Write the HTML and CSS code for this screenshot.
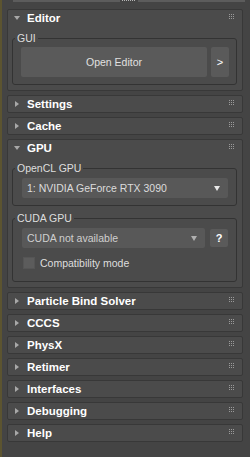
FILE: index.html
```html
<!DOCTYPE html>
<html lang="en">
<head>
  <meta charset="UTF-8" />
  <title>Command Panel</title>
  <link rel="stylesheet" href="styles.css">
</head>
<body>
  <div class="stack">
    <div class="top-edge">
      <span class="edge-line"></span>
      <span class="edge-grip"></span>
      <span class="edge-line"></span>
    </div>

    <section class="rollout open">
      <div class="rollout-head"><span class="caret"></span>Editor<span class="grip"></span></div>
      <div class="rollout-body">
        <fieldset class="group group-editor">
          <legend>GUI</legend>
          <div class="btn-row">
            <button class="btn btn-main">Open Editor</button>
            <button class="btn btn-side">&gt;</button>
          </div>
        </fieldset>
      </div>
    </section>

    <section class="rollout"><div class="rollout-head"><span class="caret"></span>Settings<span class="grip"></span></div></section>
    <section class="rollout"><div class="rollout-head"><span class="caret"></span>Cache<span class="grip"></span></div></section>

    <section class="rollout open">
      <div class="rollout-head"><span class="caret"></span>GPU<span class="grip"></span></div>
      <div class="rollout-body">
        <fieldset class="group">
          <legend>OpenCL GPU</legend>
          <div class="select"><span>1: NVIDIA GeForce RTX 3090</span><span class="arrow"></span></div>
        </fieldset>
        <fieldset class="group group-cuda">
          <legend>CUDA GPU</legend>
          <div class="btn-row wide-gap">
            <div class="select dim"><span>CUDA not available</span><span class="arrow"></span></div>
            <button class="btn btn-help">?</button>
          </div>
          <label class="check"><span class="box"></span>Compatibility mode</label>
        </fieldset>
      </div>
    </section>

    <section class="rollout"><div class="rollout-head"><span class="caret"></span>Particle Bind Solver<span class="grip"></span></div></section>
    <section class="rollout"><div class="rollout-head"><span class="caret"></span>CCCS<span class="grip"></span></div></section>
    <section class="rollout"><div class="rollout-head"><span class="caret"></span>PhysX<span class="grip"></span></div></section>
    <section class="rollout"><div class="rollout-head"><span class="caret"></span>Retimer<span class="grip"></span></div></section>
    <section class="rollout"><div class="rollout-head"><span class="caret"></span>Interfaces<span class="grip"></span></div></section>
    <section class="rollout"><div class="rollout-head"><span class="caret"></span>Debugging<span class="grip"></span></div></section>
    <section class="rollout"><div class="rollout-head"><span class="caret"></span>Help<span class="grip"></span></div></section>
  </div>
</body>
</html>
```

FILE: styles.css
```css
body {
  margin: 0;
  background-color: #444444;
  font-family: 'Liberation Sans', Arial, sans-serif;
}
.stack {
  min-height: 457px;
  box-sizing: border-box;
  border-left: 2px solid #5c5430;
  padding: 0 7px 0 5px;
}
.top-edge {
  display: flex;
  align-items: flex-start;
  height: 3px;
  margin: 0 -2px 6px 6px;
}
.edge-line {
  flex: 1;
  height: 2px;
  background-color: #5c5c5c;
}
.edge-grip {
  width: 13px;
  height: 3px;
  margin: 0 3px 0 2px;
  background-image: linear-gradient(90deg, #b5b5b5 1px, transparent 1px);
  background-size: 2px 1px;
  background-repeat: repeat-x;
  background-position: 0 0;
  box-shadow: inset 0 -1px 0 #444;
}
.rollout {
  background-color: #4b4b4b;
  border: 1px solid #383838;
  border-radius: 2px;
  margin-bottom: 4px;
}
.rollout-head {
  height: 16px;
  display: flex;
  align-items: center;
  padding: 0 8px 0 7px;
  color: #fff;
  font-weight: bold;
  font-size: 11.5px;
}
.caret {
  width: 0;
  height: 0;
  border-left: 4px solid #a8a8a8;
  border-top: 3px solid transparent;
  border-bottom: 3px solid transparent;
  margin-right: 8px;
}
.open .caret {
  border-top: 4px solid #a8a8a8;
  border-left: 3px solid transparent;
  border-right: 3px solid transparent;
  border-bottom: 0;
  margin-left: -1px;
  margin-right: 7px;
}
.grip {
  align-self: flex-start;
  width: 1px;
  height: 1px;
  margin: 4px 4px 0 auto;
  background-color: #9a9a9a;
  box-shadow: 2px 0 #9a9a9a, 4px 0 #9a9a9a,
    0 2px #9a9a9a, 2px 2px #9a9a9a, 4px 2px #9a9a9a,
    0 4px #9a9a9a, 2px 4px #9a9a9a, 4px 4px #9a9a9a;
}
.rollout-body {
  padding: 0 5px 5px 4px;
}
.group {
  border: 1px solid #333333;
  border-radius: 3px;
  margin: 6px 0 0;
  padding: 4px 8px 7px 9px;
  min-width: 0;
}
.group legend {
  padding: 0 2px;
  margin-left: -7px;
  font-size: 10.5px;
  line-height: 12px;
  color: #dedede;
}
.group-editor {
  padding: 3px 7px 7px 8px;
}
.group-editor legend {
  margin-left: -6px;
}
.group-cuda {
  padding-bottom: 12px;
}
.btn-row {
  display: flex;
  gap: 4px;
}
.btn-row.wide-gap {
  gap: 5px;
}
.btn {
  border: none;
  border-radius: 2px;
  background-color: #5a5a5a;
  color: #e0e0e0;
  font-family: inherit;
  font-size: 10.5px;
  padding: 0;
}
.btn-main {
  flex: 1;
  height: 30px;
}
.btn-side {
  width: 18px;
  height: 30px;
  color: #fff;
  font-size: 11px;
}
.btn-help {
  width: 18px;
  height: 18px;
  margin-top: 1px;
  color: #fff;
  font-weight: bold;
  font-size: 11px;
}
.select {
  flex: 1;
  height: 20px;
  display: flex;
  align-items: center;
  justify-content: space-between;
  padding: 0 8px 0 5px;
  background-color: #585858;
  border-radius: 2px;
  color: #dcdcdc;
  font-size: 10.5px;
}
.arrow {
  width: 0;
  height: 0;
  border-top: 5px solid #e8e8e8;
  border-left: 3px solid transparent;
  border-right: 3px solid transparent;
}
.select.dim {
  color: #cfcfcf;
}
.select.dim .arrow {
  border-top-color: #b0b0b0;
}
.check {
  display: flex;
  align-items: center;
  margin-top: 9px;
  height: 12px;
  color: #dedede;
  font-size: 10.5px;
}
.box {
  width: 12px;
  height: 12px;
  box-sizing: border-box;
  margin: 0 5px 0 1px;
  background-color: #5c5c5c;
  border: 1px solid #555;
}
```
